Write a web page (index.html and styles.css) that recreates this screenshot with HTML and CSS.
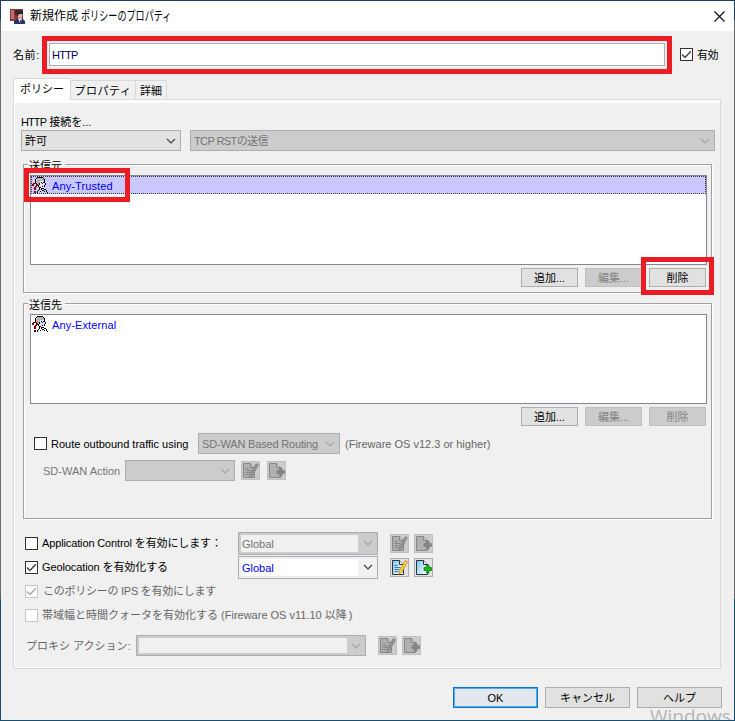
FILE: index.html
```html
<!DOCTYPE html>
<html lang="ja">
<head>
<meta charset="utf-8">
<title>新規作成 ポリシーのプロパティ</title>
<link rel="stylesheet" href="styles.css">
</head>
<body>
<svg class="defs" aria-hidden="true">
  <symbol id="chev" viewBox="0 0 10 6"><path d="M1 1l4 4 4-4" fill="none" stroke="currentColor" stroke-width="1.2"/></symbol>
  <symbol id="tick" viewBox="0 0 11 11"><path d="M1 5.5l3 3L9.800 2.200" fill="none" stroke="currentColor" stroke-width="1.5"/></symbol>
  <symbol id="face" viewBox="0 0 16 16" shape-rendering="crispEdges">
    <path fill="#b4b4b4" d="M5 1h6v1h2v3h-1V4H9v2H7v3H4V3h1z"/>
    <path fill="#e4e4e4" d="M8 4h4v1h1v5h-1v1h-2v1H8V9H7V6h1z"/>
    <path fill="#000" d="M5 0h6v1H5zM4 1h1v1H4zM11 1h1v1h-1zM3 2h1v4H3zM12 2h1v4h-1zM7 6h1v2H7zM9 5h1v1H9zM13 6h1v2h-1zM12 8h1v2h-1zM6 8h1v2H6zM7 10h2v1H7zM10 9h1v1h-1zM9 11h3v1H9zM7 11h1v2H7zM6 13h1v1H6zM5 14h1v2H5zM9 12h1v1H9zM10 13h2v1h-2zM12 14h1v1h-1zM12 12h2v1h-2zM14 13h1v2h-1zM15 15h1v1h-1zM8 14h1v1H8z"/>
    <path fill="#800000" d="M1 6h4v1H1zM0 7h2v2H0zM4 7h2v2H4zM3 9h2v1H3zM2 10h2v3H2zM2 14h2v2H2z"/>
    <path fill="#00f" d="M10 6h1v1h-1zM11 5h1v1h-1z"/>
  </symbol>
  <symbol id="edit" viewBox="0 0 17 17">
    <path class="sheet" d="M1.500 1.500h7l4 4v10h-11z"/><path class="fold" d="M8.500 1.500v4h4"/>
    <path class="lines" d="M3.500 6.500h3M3.500 8.500h6M3.500 10.500h5M3.500 12.500h4"/>
    <path class="pen" d="M7.500 15.500l1-4L14.200 1.500l2.200 1.200L11 13z"/>
  </symbol>
  <symbol id="add" viewBox="0 0 17 17">
    <path class="sheet" d="M1.500 1.500h7l4 4v10h-11z"/><path class="fold" d="M8.500 1.500v4h4"/>
    <path class="plus" d="M9 8.500h2.500V6h2.500v2.500H16.500v3h-2.500V14h-2.500v-2.500H9z"/>
  </symbol>
  <linearGradient id="paper" x1="0" y1="0" x2="1" y2="1"><stop offset="0" stop-color="#7fc6ee"/><stop offset="1" stop-color="#fff"/></linearGradient>
</svg>
<div class="window">
  <header class="titlebar">
    <svg class="appicon" viewBox="0 0 15 15"><path fill="#8d3a3c" d="M0 0h13v12H0z"/><path fill="#bd6f68" d="M1 1h3v9H1z"/><path fill="#4c2027" d="M5 1h7v5H5z"/><path fill="#e7b49c" d="M8 4h4v4l-2 2-2-2z"/><path fill="#202630" d="M7 2h6v3H9L8 7H7z"/><path fill="#1f3a70" d="M4 12l4-3 2 2 2-2 3 3v3H4z"/><path fill="#fff" d="M8 9l2 1 1-1 1 1-2 4z"/><path fill="#c02020" d="M10 11h1v3h-1z"/></svg>
    <span class="title-kanji">新規作成</span><span class="title-kana">ポリシーのプロパティ</span>
    <svg class="close" viewBox="0 0 11 11"><path d="M.5.5l10 10M10.500.5l-10 10" stroke="#111" stroke-width="1.200"/></svg>
  </header>

  <div class="namerow">
    <span class="name-label">名前:</span>
    <div class="name-input">HTTP</div>
    <span class="check"><svg><use href="#tick"/></svg></span>
    <span class="enable-label">有効</span>
  </div>

  <nav class="tabs">
    <span class="tab active">ポリシー</span><span class="tab tab-prop">プロパティ</span><span class="tab tab-detail">詳細</span>
  </nav>

  <main class="panel">
    <div class="conn-label"><span class="tight">HTTP</span> 接続を...</div>
    <div class="row conn-row">
      <div class="select allow"><span>許可</span><svg><use href="#chev"/></svg></div>
      <div class="select off rst"><span>TCP RSTの送信</span><svg><use href="#chev"/></svg></div>
    </div>

    <section class="group from">
      <div class="legend">送信元</div>
      <div class="list">
        <div class="item selected"><svg><use href="#face"/></svg><span>Any-Trusted</span></div>
      </div>
      <div class="row actions"><span class="btn">追加...</span><span class="btn off">編集...</span><span class="btn">削除</span></div>
    </section>

    <section class="group to">
      <div class="legend">送信先</div>
      <div class="list">
        <div class="item"><svg><use href="#face"/></svg><span>Any-External</span></div>
      </div>
      <div class="row actions"><span class="btn">追加...</span><span class="btn off">編集...</span><span class="btn off">削除</span></div>
      <div class="row route">
        <span class="check"></span><span class="route-label">Route outbound traffic using</span>
        <div class="select off routing"><span>SD-WAN Based Routing</span><svg><use href="#chev"/></svg></div>
        <span class="hint">(Fireware OS v12.3 or higher)</span>
      </div>
      <div class="row sdwan">
        <span class="sd-label">SD-WAN Action</span>
        <div class="select off sd-select"><span></span><svg><use href="#chev"/></svg></div>
        <span class="ibtn off"><svg><use href="#edit"/></svg></span><span class="ibtn off"><svg><use href="#add"/></svg></span>
      </div>
    </section>

    <div class="row opt">
      <span class="check"></span><span class="opt-label l-app">Application Control <i>を有効にします：</i></span>
      <div class="combo off"><span>Global</span><svg><use href="#chev"/></svg></div>
      <span class="ibtn off"><svg><use href="#edit"/></svg></span><span class="ibtn off"><svg><use href="#add"/></svg></span>
    </div>
    <div class="row opt">
      <span class="check"><svg><use href="#tick"/></svg></span><span class="opt-label l-geo">Geolocation <i>を有効化する</i></span>
      <div class="combo"><span>Global</span><svg><use href="#chev"/></svg></div>
      <span class="ibtn"><svg><use href="#edit"/></svg></span><span class="ibtn"><svg><use href="#add"/></svg></span>
    </div>
    <div class="row opt disabled">
      <span class="check"><svg><use href="#tick"/></svg></span><span class="opt-label l-ips">このポリシーの IPS を有効にします</span>
    </div>
    <div class="row opt disabled">
      <span class="check"></span><span class="opt-label">帯域幅と時間クォータを有効化する (Fireware OS v11.10 以降<i class="paren">)</i></span>
    </div>
    <div class="row proxy">
      <span class="proxy-label">プロキシ アクション:</span>
      <div class="combo off"><span></span><svg><use href="#chev"/></svg></div>
      <span class="ibtn off"><svg><use href="#edit"/></svg></span><span class="ibtn off"><svg><use href="#add"/></svg></span>
    </div>
  </main>

  <footer class="footer"><span class="fbtn ok">OK</span><span class="fbtn">キャンセル</span><span class="fbtn">ヘルプ</span></footer>
  <div class="watermark">Windows</div>
  <div class="mark mark-name"></div>
  <div class="mark mark-source"></div>
  <div class="mark mark-delete"></div>
</div>
</body>
</html>
```
FILE: styles.css
```css
* { box-sizing: border-box; }
body { margin: 0; font: 11px/14px "Liberation Sans", "Noto Sans CJK JP", sans-serif; color: #000; }
i { font-style: normal; }
svg { display: block; flex: none; }
.defs { position: absolute; width: 0; height: 0; }
span, .conn-label, .legend { white-space: nowrap; }
.window { position: relative; width: 735px; height: 721px; overflow: hidden; background: #f0f0f0; border: 1px solid; border-image: linear-gradient(#1b3f63 0 20px, #696969 20px 599px, #174f70 599px) 1; }
.titlebar { display: flex; align-items: center; height: 30px; padding: 0 9px; background: #fff; font-size: 12px; }
.appicon { width: 15px; height: 15px; margin-right: 5px; }
.title-kanji { width: 51px; }
.title-kana { font-size: 13px; transform: scaleX(.7); transform-origin: 0 50%; }
.close { width: 11px; height: 11px; margin-left: auto; }

.namerow { display: flex; align-items: center; height: 23px; margin-top: 12px; padding-left: 11px; }
.name-label { width: 37px; padding-left: 1px; letter-spacing: .6px; }
.name-input { width: 616px; height: 23px; padding: 4px 2px; line-height: 14px; background: #fff; border: 1px solid #abadb3; color: #000050; letter-spacing: -.8px; }
.check { display: block; flex: none; width: 13px; height: 13px; background: #fff; border: 1px solid #333; color: #444; }
.check svg { width: 11px; height: 11px; }
.namerow .check { margin-left: 15px; }
.enable-label { margin-left: 4px; letter-spacing: -.5px; }

.tabs { display: flex; align-items: flex-end; height: 21px; margin: 12px 0 0 12px; }
.tab { height: 19px; border: 1px solid #d9d9d9; border-left: 0; border-bottom: 0; text-align: center; line-height: 20px; letter-spacing: .5px; }
.tab.active { width: 58px; height: 22px; margin-bottom: -1px; background: #fff; border-left: 1px solid #d9d9d9; line-height: 20px; letter-spacing: 0; position: relative; }
.tab-prop { width: 65px; }
.tab-detail { width: 31px; letter-spacing: 0; }

.panel { width: 708px; height: 570px; margin-left: 12px; padding: 14px 0 0 7px; border: 1px solid #d9d9d9; box-shadow: inset 1px 3px #fff, inset 0 -1px #fff; }
.row { display: flex; align-items: center; }
.conn-label { height: 16px; line-height: 16px; }
.tight { letter-spacing: -.9px; }
.select { display: flex; align-items: center; justify-content: space-between; height: 21px; padding: 0 4px 0 3px; border: 1px solid #adadb4; background: #e1e1e1; }
.select svg, .combo svg { width: 10px; height: 6px; color: #444; }
.select.off, .combo.off, .btn.off, .ibtn.off { background: #ccc; color: #747474; }
.select.off svg, .combo.off svg { color: #a5a5a5; }
.allow { width: 160px; }
.rst { width: 525px; margin-left: 9px; letter-spacing: -.6px; }

.group { width: 689px; margin-left: 2px; border: 1px solid #a0a0a0; box-shadow: 1px 1px #fff, inset 1px 1px #fff; padding-left: 6px; }
.from { height: 129px; margin-top: 13px; }
.to { height: 216px; margin-top: 10px; }
.legend { width: 37px; height: 14px; margin: -7px 0 0 -2px; padding-left: 1px; line-height: 16px; background: #f0f0f0; }
.list { width: 677px; height: 90px; margin-top: 3px; border: 1px solid #828790; background: #fff; }
.item { display: flex; align-items: center; height: 18px; padding-left: 1px; color: #00f; }
.item svg { width: 16px; height: 16px; margin-right: 4px; }
.item span { letter-spacing: .1px; padding-top: 2px; }
.selected { background: #c8c8ff; border: 1px dotted #333; padding-left: 0; }
.actions { gap: 7px; margin: 3px 0 0 491px; }
.btn { width: 57px; height: 19px; border: 1px solid #adadad; background: #e1e1e1; line-height: 18px; text-align: center; }
.btn.off { border-color: #bfbfbf; color: #838383; }
.route { height: 21px; margin: 7px 0 0 4px; }
.route-label { width: 147px; margin-left: 4px; }
.routing { width: 142px; letter-spacing: -.17px; }
.hint { margin-left: 5px; color: #666; }
.sdwan { height: 21px; margin: 6px 0 0 13px; }
.sd-label { width: 82px; color: #777; }
.sd-select { width: 110px; }
.ibtn { --paper: url(#paper); --fold: #fff; --edge: #26323c; --line: #3779a8; --pen: #ffd633; --pen-edge: #b77920; --plus: #18b818; --plus-edge: #08700c; width: 19px; height: 19px; border: 1px solid #adadad; background: #e1e1e1; }
.ibtn.off { --paper: #b0b0b0; --fold: #c4c4c4; --edge: #858585; --line: #858585; --pen: #929292; --pen-edge: #848484; --plus: #858585; --plus-edge: #7c7c7c; border-color: #bfbfbf; }
.ibtn svg { width: 17px; height: 17px; }
.sdwan .ibtn { margin-left: 6px; }
.sdwan .ibtn + .ibtn { margin-left: 7px; }
.sheet { fill: var(--paper); stroke: var(--edge); }
.fold { fill: var(--fold); stroke: var(--edge); }
.lines { stroke: var(--line); fill: none; }
.pen { fill: var(--pen); stroke: var(--pen-edge); stroke-width: .7px; }
.plus { fill: var(--plus); stroke: var(--plus-edge); stroke-width: .7px; }

.opt { height: 24px; margin-left: 4px; }
.group + .opt { margin-top: 12px; }
.opt-label { width: 196px; margin-left: 4px; }
.l-app { letter-spacing: -.13px; }
.l-geo { letter-spacing: -.1px; }
.l-ips { padding-left: 1px; letter-spacing: -.25px; }
.paren { margin-left: 2px; }
.combo { display: flex; align-items: center; justify-content: space-between; width: 140px; height: 23px; border: 1px solid #abadb3; padding: 2px 4px 2px 2px; background: #f0f0f0; color: #00f; }
.combo span { width: 117px; height: 17px; padding-left: 1px; line-height: 18px; background: #fff; }
.combo.off span { background: #f0f0f0; }
.opt .ibtn { margin-left: 12px; }
.opt .ibtn + .ibtn { margin-left: 5px; }
.disabled { color: #666; }
.disabled .check { border-color: #c6c6c6; color: #aaa; }
.proxy { height: 21px; margin: 8px 0 0 5px; }
.proxy-label { width: 110px; color: #666; }
.proxy .combo { width: 230px; height: 21px; }
.proxy .combo span { width: 208px; height: 15px; }
.proxy .ibtn { margin-left: 12px; }
.proxy .ibtn + .ibtn { margin-left: 5px; }

.footer { display: flex; gap: 7px; margin: 18px 0 0 452px; }
.fbtn { width: 85px; height: 21px; border: 1px solid #adadad; background: #e1e1e1; text-align: center; line-height: 20px; }
.ok { border: 1px solid #0078d7; box-shadow: inset 0 0 0 1px #5ba9e4; background: #e3e8ee; }
.watermark { position: absolute; left: 649px; top: 705px; font: 19px/21px "Open Sans", sans-serif; color: #b5b5b5; }
.mark { position: absolute; border: 5px solid #ed1c24; }
.mark-name { left: 41px; top: 35px; width: 630px; height: 38px; }
.mark-source { left: 23px; top: 167px; width: 106px; height: 34px; }
.mark-delete { left: 640px; top: 256px; width: 73px; height: 38px; }
```
